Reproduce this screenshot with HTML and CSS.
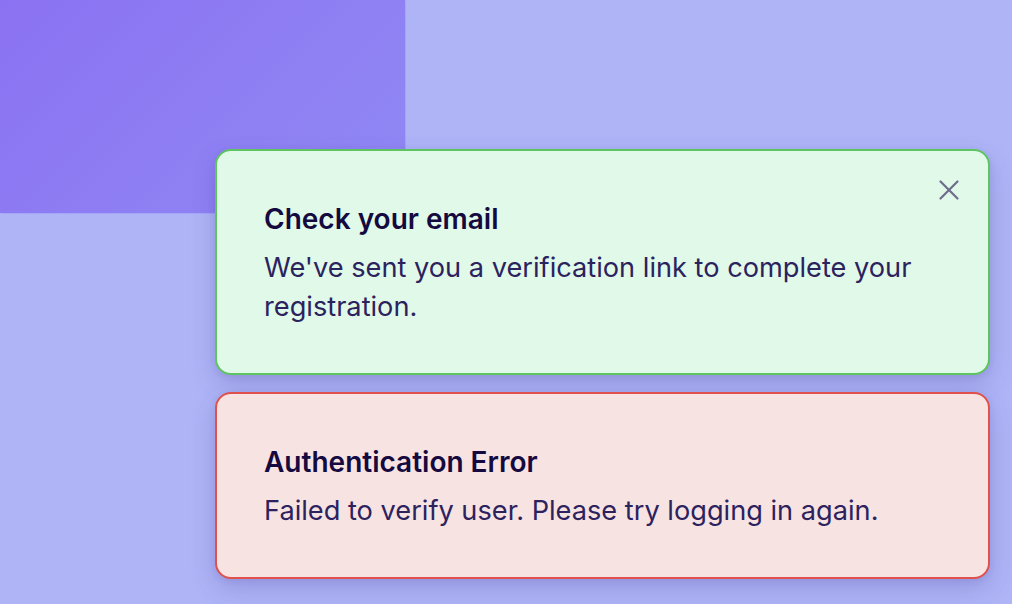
FILE: index.html
```html
<!DOCTYPE html>
<html lang="en">
<head>
<meta charset="utf-8">
<title>Toasts</title>
<link rel="stylesheet" href="styles.css">
</head>
<body>
<div class="backdrop"></div>
<main class="stack">
  <section class="toast toast-success">
    <button class="close" aria-label="Close">
      <svg width="22" height="22" viewBox="0 0 22 22"><path d="M2.5 2.5 L19.5 19.5 M19.5 2.5 L2.5 19.5" stroke="currentColor" stroke-width="2.2" stroke-linecap="round" fill="none"/></svg>
    </button>
    <h2 class="title">Check your email</h2>
    <p class="desc">We've sent you a verification link to complete your registration.</p>
  </section>
  <section class="toast toast-error">
    <h2 class="title">Authentication Error</h2>
    <p class="desc">Failed to verify user. Please try logging in again.</p>
  </section>
</main>
</body>
</html>
```
FILE: styles.css
```css
html, body {
  margin: 0;
  padding: 0;
  width: 1012px;
  height: 604px;
  overflow: hidden;
}
body {
  background: #aeb4f6;
  font-family: Inter, "Noto Sans", sans-serif;
  position: relative;
}
.backdrop {
  position: absolute;
  left: 0;
  top: 0;
  width: 405px;
  height: 213px;
  background: linear-gradient(135deg, #8b72f2 0%, #9189f4 100%);
  box-shadow: 1px 1px 0 #a3a6f5;
}
.stack {
  position: relative;
  display: flex;
  flex-direction: column;
  align-items: flex-end;
  gap: 17px;
  padding: 149px 22px 0 0;
}
.toast {
  position: relative;
  box-sizing: border-box;
  width: 775px;
  padding: 47px 47px 47px 47px;
  border: 2px solid;
  border-radius: 16px;
  box-shadow: 0 10px 24px rgba(70, 60, 150, 0.22), 0 2px 6px rgba(70, 60, 150, 0.10);
}
.toast-success {
  background: #e1f9e9;
  border-color: #5ec460;
}
.toast-error {
  background: #f8e3e3;
  border-color: #e0504c;
}
.title {
  margin: 0;
  font-size: 28px;
  font-weight: 600;
  line-height: 42px;
  color: #140a40;
}
.desc {
  margin: 8px 0 0;
  font-size: 27.2px;
  font-weight: 400;
  line-height: 39px;
  color: #2b225e;
}
.close {
  position: absolute;
  top: 28px;
  right: 28px;
  width: 22px;
  height: 22px;
  padding: 0;
  border: 0;
  background: none;
  color: #6e6c8c;
  display: flex;
  align-items: center;
  justify-content: center;
}
```
